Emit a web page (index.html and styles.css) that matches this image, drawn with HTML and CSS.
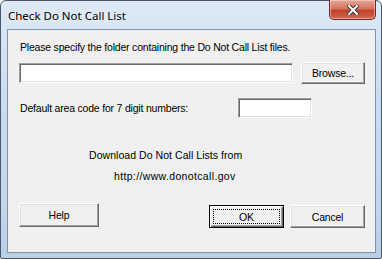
FILE: index.html
```html
<!DOCTYPE html>
<html lang="en">

<head>
  <meta charset="UTF-8">
  <title>Check Do Not Call List</title>
  <link rel="stylesheet" href="styles.css">
</head>

<body>
  <div class="window">
    <div class="titlebar">
      <span class="caption">Check Do Not Call List</span>
      <button class="close-btn" aria-label="Close">
        <svg width="12" height="10" viewBox="0 0 12 10">
          <path d="M2 1 L10 9 M10 1 L2 9" stroke="#3a3a3a" stroke-width="4" stroke-linecap="square" />
          <path d="M2 1 L10 9 M10 1 L2 9" stroke="#ffffff" stroke-width="2" stroke-linecap="square" />
        </svg>
      </button>
    </div>

    <div class="client">
      <div class="prompt">Please specify the folder containing the Do Not Call List files.</div>

      <div class="path-row">
        <input class="field path-field" type="text">
        <button class="btn browse-btn">Browse...</button>
      </div>

      <div class="area-row">
        <span class="area-label">Default area code for 7 digit numbers:</span>
        <input class="field area-field" type="text">
      </div>

      <div class="download-line">Download Do Not Call Lists from</div>
      <div class="url-line">http://www.donotcall.gov</div>

      <div class="button-row">
        <button class="btn help-btn">Help</button>
        <button class="btn default-btn"><span class="focus">OK</span></button>
        <button class="btn cancel-btn">Cancel</button>
      </div>
    </div>
  </div>
</body>

</html>
```

FILE: styles.css
```css
* {
  box-sizing: border-box;
}

body {
  margin: 0;
  width: 382px;
  height: 259px;
  background: #ffffff;
  font-family: "Liberation Sans", Arial, sans-serif;
  font-size: 10.5px;
  letter-spacing: -0.2px;
  color: #000;
}

.window {
  width: 382px;
  height: 259px;
  display: flex;
  flex-direction: column;
  border: 1px solid #4a5868;
  border-radius: 6px 6px 2px 2px;
  padding: 0 5px 5px 6px;
  background: linear-gradient(to bottom, #dde9f6 0%, #cadcf0 40%, #c2d6ec 80%, #b9cfe7 100%);
}

.titlebar {
  height: 28px;
  display: flex;
  align-items: flex-start;
}

.caption {
  font-family: "Noto Sans", "Open Sans", sans-serif;
  font-size: 11.5px;
  letter-spacing: 0;
  margin: 7px 0 0 1px;
  color: #000;
  text-shadow: 0 0 6px #f4f8fc;
}

.close-btn {
  margin: -1px 0 0 auto;
  width: 47px;
  height: 20px;
  padding: 0;
  border: 1px solid #6b2a22;
  border-top: none;
  border-radius: 0 0 5px 5px;
  background: linear-gradient(to bottom, #e6a99b 0%, #d4735f 45%, #c2422b 55%, #d0674f 100%);
  box-shadow: inset 0 0 0 1px rgba(255, 220, 210, 0.5);
  display: flex;
  align-items: center;
  justify-content: center;
}

.client {
  flex: 1;
  background: #f0f0f0;
  border: 1px solid #8393a6;
  padding: 11px 10px 0 11px;
}

.prompt {
  line-height: 13px;
  padding-left: 1px;
}

.path-row {
  display: flex;
  align-items: center;
  gap: 8px;
  margin-top: 8px;
  height: 22px;
}

.field {
  height: 20px;
  background: #fff;
  border-style: solid;
  border-width: 1px;
  border-color: #a0a0a0 #ffffff #ffffff #a0a0a0;
  box-shadow: inset 1px 1px 0 #696969, inset -1px -1px 0 #e3e3e3;
  padding: 0 3px;
  font: inherit;
  outline: none;
}

.path-field {
  width: 274px;
}

.btn {
  font: inherit;
  letter-spacing: inherit;
  color: #000;
  background: #f0f0f0;
  border-style: solid;
  border-width: 1px;
  border-color: #ffffff #696969 #696969 #ffffff;
  box-shadow: inset -1px -1px 0 #a0a0a0, inset 1px 1px 0 #e3e3e3;
  padding: 0;
}

.browse-btn {
  width: 64px;
  height: 22px;
}

.area-row {
  display: flex;
  align-items: center;
  margin-top: 14px;
  height: 20px;
}

.area-label {
  width: 219px;
  padding-left: 1px;
}

.area-field {
  width: 74px;
}

.download-line {
  margin: 31px 0 0 70px;
  line-height: 13px;
  letter-spacing: 0.05px;
}

.url-line {
  margin: 8px 0 0 95px;
  line-height: 13px;
  letter-spacing: 0.35px;
}

.button-row {
  display: flex;
  align-items: flex-start;
  margin-top: 20px;
}

.help-btn {
  width: 80px;
  height: 24px;
}

.default-btn {
  margin-left: auto;
  margin-top: 2px;
  width: 75px;
  height: 23px;
  border: 1px solid #000;
  box-shadow: inset 1px 1px 0 #fff, inset -1px -1px 0 #696969, inset -2px -2px 0 #a0a0a0;
  padding: 3px;
  display: flex;
}

.focus {
  flex: 1;
  border: 1px dotted #000;
  display: flex;
  align-items: center;
  justify-content: center;
}

.cancel-btn {
  margin: 2px 0 0 6px;
  width: 75px;
  height: 23px;
}
```
